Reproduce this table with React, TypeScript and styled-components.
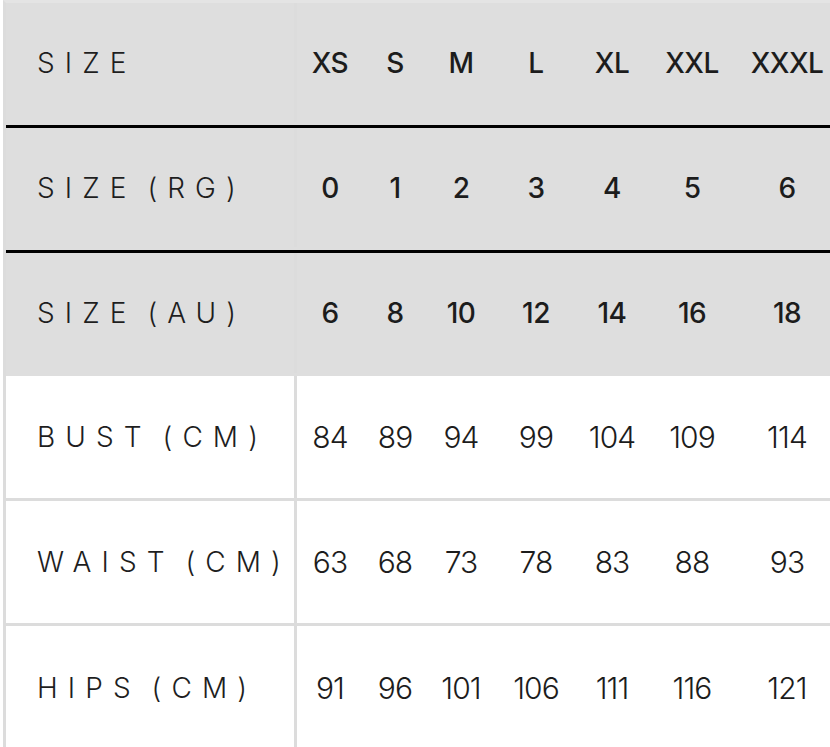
import React from "react";
import styled, { createGlobalStyle } from "styled-components";

const Global = createGlobalStyle`
  html, body { margin: 0; padding: 0; background: #ffffff; overflow: hidden; }
  #root { width: 830px; height: 747px; overflow: hidden; }
`;

const Wrapper = styled.div`
  margin: 0 0 0 3px;
  border-left: 3px solid #dcdcdc;
  border-top: 3px solid #e4e4e4;
  width: 900px;
`;

const Row = styled.div<{ $head?: boolean; $line?: "black" | "gray" | "none" }>`
  display: grid;
  grid-template-columns: 291px 66px 64px 68px 82px 70px 90px 100px;
  align-items: stretch;
  height: ${(p) => (p.$line === "none" ? "123px" : "125px")};
  box-sizing: border-box;
  padding-bottom: ${(p) => (p.$head ? "3px" : "0")};
  background: ${(p) => (p.$head ? "#dedede" : "#ffffff")};
  border-bottom: ${(p) =>
    p.$line === "black" ? "3px solid #000000" : p.$line === "gray" ? "3px solid #dcdcdc" : "0"};
`;

const Label = styled.div`
  box-sizing: border-box;
  border-right: 3px solid #dcdcdc;
  display: flex;
  align-items: center;
  padding-left: 31px;
  font-family: "Inter", "Liberation Sans", sans-serif;
  font-weight: 300;
  font-size: 28px;
  letter-spacing: 0.36em;
  word-spacing: -7px;
  color: #1e1e1e;
  white-space: nowrap;
`;

const Cell = styled.div<{ $head?: boolean }>`
  display: flex;
  align-items: center;
  justify-content: center;
  font-family: "Inter", "Liberation Sans", sans-serif;
  font-weight: ${(p) => (p.$head ? 500 : 300)};
  font-size: ${(p) => (p.$head ? "28px" : "30px")};
  letter-spacing: ${(p) => (p.$head ? "-0.02em" : "-0.03em")};
  color: #1c1c1c;
  white-space: nowrap;
`;

type RowData = { label: string; values: string[]; head: boolean; line: "black" | "gray" | "none" };

const rows: RowData[] = [
  { label: "SIZE", values: ["XS", "S", "M", "L", "XL", "XXL", "XXXL"], head: true, line: "black" },
  { label: "SIZE (RG)", values: ["0", "1", "2", "3", "4", "5", "6"], head: true, line: "black" },
  { label: "SIZE (AU)", values: ["6", "8", "10", "12", "14", "16", "18"], head: true, line: "none" },
  { label: "BUST (CM)", values: ["84", "89", "94", "99", "104", "109", "114"], head: false, line: "gray" },
  { label: "WAIST (CM)", values: ["63", "68", "73", "78", "83", "88", "93"], head: false, line: "gray" },
  { label: "HIPS (CM)", values: ["91", "96", "101", "106", "111", "116", "121"], head: false, line: "none" },
];

export default function App() {
  return (
    <>
      <Global />
      <Wrapper>
        {rows.map((r) => (
          <Row key={r.label} $head={r.head} $line={r.line}>
            <Label>{r.label}</Label>
            {r.values.map((v, i) => (
              <Cell key={i} $head={r.head}>
                {v}
              </Cell>
            ))}
          </Row>
        ))}
      </Wrapper>
    </>
  );
}
